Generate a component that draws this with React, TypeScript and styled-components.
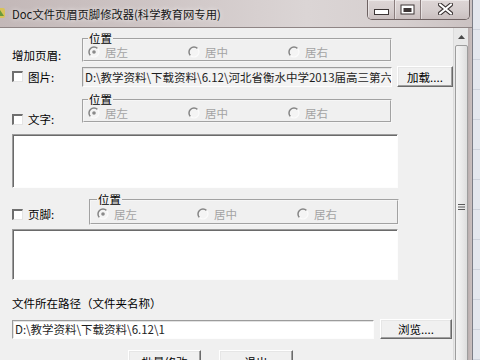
import React from "react";
import styled, { createGlobalStyle } from "styled-components";

const Global = createGlobalStyle`
  html, body { margin: 0; padding: 0; width: 480px; height: 360px; overflow: hidden; background: #f0f0f0; }
  body { font-family: "Noto Sans CJK SC", "Noto Sans", sans-serif; font-size: 11.5px; color: #000; }
  #root { width: 480px; height: 360px; }
`;

const Screen = styled.div`
  display: flex;
  width: 480px;
  height: 360px;
  overflow: hidden;
`;

const Win = styled.div`
  width: 472px;
  flex: none;
  display: flex;
  flex-direction: column;
  height: 100%;
`;

const TitleBar = styled.div`
  height: 27px;
  flex: none;
  display: flex;
  align-items: flex-start;
  background: linear-gradient(90deg, #c3b8b8 0%, #cfc6c6 35%, #dbd5d5 65%, #d6cfcf 85%, #cbc2c2 100%);
`;

const AppIcon = styled.svg`
  flex: none;
  margin: 7px 6px 0 -6px;
`;

const Title = styled.div`
  padding-top: 7px;
  line-height: 14px;
  font-size: 11.3px;
  color: #161616;
  white-space: nowrap;
  text-shadow: 0 0 5px rgba(255, 255, 255, 0.9);
`;

const Controls = styled.div`
  margin-left: auto;
  margin-right: 2px;
  height: 19px;
  display: flex;
  border: 1px solid #6e6262;
  border-top: none;
  border-radius: 0 0 5px 5px;
  overflow: hidden;
  box-shadow: inset 0 -1px 0 rgba(255, 255, 255, 0.5);
`;

const CtrlBtn = styled.div<{ $w: number; $first?: boolean }>`
  width: ${(p) => p.$w}px;
  height: 100%;
  display: flex;
  align-items: center;
  justify-content: center;
  background: linear-gradient(180deg, #ddd5d5 0%, #d6cece 50%, #c9bfbf 100%);
  border-left: ${(p) => (p.$first ? "none" : "1px solid #8a7d7d")};
  box-shadow: inset 1px 1px 0 rgba(255, 255, 255, 0.45);
`;

const Body = styled.div`
  flex: 1;
  display: flex;
  border-top: 1px solid #8f8585;
  min-height: 0;
`;

const Client = styled.div`
  flex: 1;
  display: flex;
  flex-direction: column;
  padding: 4px 0 0 12px;
  background: #f0f0f0;
  min-width: 0;
  overflow: hidden;

  & > * {
    flex: none;
  }
`;

const Row = styled.div<{ $top: number; $cols: string }>`
  display: grid;
  grid-template-columns: ${(p) => p.$cols};
  align-items: start;
  margin-top: ${(p) => p.$top}px;
`;

const CenterRow = styled(Row)`
  align-items: center;
`;

const LabelCell = styled.div<{ $pt?: number }>`
  display: flex;
  align-items: center;
  gap: 5px;
  height: 14px;
  line-height: 14px;
  padding-top: ${(p) => p.$pt ?? 0}px;
  white-space: nowrap;
`;

const CheckBox = styled.span`
  flex: none;
  width: 8px;
  height: 8px;
  background: #fff;
  border-top: 2px solid #6f6f6f;
  border-left: 2px solid #6f6f6f;
  border-right: 1px solid #e4e4e4;
  border-bottom: 1px solid #e4e4e4;
`;

const GroupBox = styled.fieldset<{ $pad: number; $pt?: number; $pb?: number }>`
  margin: 0;
  min-width: 0;
  width: 310px;
  box-sizing: border-box;
  padding: ${(p) => p.$pt ?? 0}px 0 ${(p) => p.$pb ?? 1}px ${(p) => p.$pad}px;
  border: 2px groove #f6f6f6;
  display: grid;
  grid-template-columns: repeat(3, 100px);
`;

const Legend = styled.legend`
  padding: 0 1px;
  margin: 0;
  line-height: 13px;
  font-size: 11.5px;
  color: #000;
`;

const RadioOpt = styled.div`
  display: flex;
  align-items: center;
  gap: 5px;
  height: 14px;
  line-height: 14px;
  color: #a3a3a3;
  white-space: nowrap;
`;

const Field = styled.div<{ $w: number; $h: number; $bg: string; $deep?: boolean }>`
  box-sizing: border-box;
  width: ${(p) => p.$w}px;
  height: ${(p) => p.$h}px;
  background: ${(p) => p.$bg};
  border-top: 1px solid #9c9c9c;
  border-left: 1px solid #9c9c9c;
  border-right: 1px solid #fdfdfd;
  border-bottom: 1px solid #fdfdfd;
  box-shadow: ${(p) => (p.$deep ? "inset 1px 1px 0 #6a6a6a" : "inset 1px 1px 0 #e2e2e2")};
  padding: 0 2px 0 2px;
  line-height: ${(p) => p.$h - 2}px;
  color: #1e1e1e;
  white-space: nowrap;
  overflow: hidden;
`;

const TextArea = styled(Field)<{ $top: number }>`
  margin-top: ${(p) => p.$top}px;
`;

const Btn = styled.button<{ $w: number; $h: number }>`
  box-sizing: border-box;
  width: ${(p) => p.$w}px;
  height: ${(p) => p.$h}px;
  padding: 0;
  margin: 0;
  font: inherit;
  line-height: 14px;
  color: #000;
  background: #f0f0f0;
  border: 1px solid;
  border-color: #ffffff #6a6a6a #6a6a6a #ffffff;
  box-shadow: inset -1px -1px 0 #a0a0a0, inset 1px 1px 0 #e6e6e6;
  white-space: nowrap;
`;

const EndBtn = styled(Btn)`
  justify-self: end;
`;

const PlainLabel = styled.div<{ $top: number }>`
  margin-top: ${(p) => p.$top}px;
  line-height: 14px;
  white-space: nowrap;
`;

const PathRow = styled.div`
  display: flex;
  align-items: center;
  gap: 6px;
  margin-top: 9px;
`;

const ActionRow = styled.div`
  display: flex;
  gap: 18px;
  margin: 11px 0 0 116px;
`;

const ScrollBar = styled.div`
  width: 15px;
  flex: none;
  display: flex;
  flex-direction: column;
  align-items: center;
  background: #e8e8e8;
  border-left: 1px solid #dcdcdc;
  box-sizing: border-box;
  overflow: hidden;
`;

const ArrowBtn = styled.div`
  height: 17px;
  width: 100%;
  flex: none;
  display: flex;
  align-items: center;
  justify-content: center;
`;

const Thumb = styled.div`
  flex: none;
  width: 13px;
  height: 324px;
  box-sizing: border-box;
  border: 1px solid #9d9d9d;
  border-radius: 2px;
  background: linear-gradient(90deg, #f4f4f4 0%, #ebebeb 50%, #dedede 100%);
  display: flex;
  align-items: center;
  justify-content: center;
`;

const Frame = styled.div`
  width: 4px;
  flex: none;
  background: linear-gradient(90deg, #b9aeae, #cbc1c1);
`;

const Outside = styled.div`
  width: 8px;
  flex: none;
  height: 100%;
  box-sizing: border-box;
  border-left: 1px solid #7b7d86;
  background: repeating-linear-gradient(180deg, #e4e7ee 0px, #e4e7ee 29px, #b9bfcc 30px);
`;

const Radio: React.FC<{ checked?: boolean; label: string }> = ({ checked, label }) => (
  <RadioOpt>
    <svg width="12" height="12" viewBox="0 0 12 12">
      <circle cx="6" cy="6" r="5" fill="#f4f4f4" />
      <path d="M2.46 9.54 A5 5 0 0 1 9.54 2.46" stroke="#858585" strokeWidth="1.5" fill="none" />
      <path d="M9.54 2.46 A5 5 0 0 1 2.46 9.54" stroke="#fbfbfb" strokeWidth="1.2" fill="none" />
      {checked && <circle cx="6" cy="6" r="1.8" fill="#8a8a8a" />}
    </svg>
    {label}
  </RadioOpt>
);

const Positions: React.FC<{ pad: number; pt?: number; pb?: number }> = ({ pad, pt, pb }) => (
  <GroupBox $pad={pad} $pt={pt} $pb={pb}>
    <Legend>位置</Legend>
    <Radio checked label="居左" />
    <Radio label="居中" />
    <Radio label="居右" />
  </GroupBox>
);

export default function App() {
  return (
    <>
      <Global />
      <Screen>
        <Win>
          <TitleBar>
            <AppIcon width="12" height="12" viewBox="0 0 12 12">
              <rect x="1" y="1" width="10" height="10" rx="2" fill="#d8c25a" />
              <path d="M2 9 L6 3 L10 9 Z" fill="#6a9a3a" />
            </AppIcon>
            <Title>Doc文件页眉页脚修改器(科学教育网专用)</Title>
            <Controls>
              <CtrlBtn $w={26} $first>
                <svg width="15" height="6" viewBox="0 0 15 6" style={{ marginTop: 4 }}>
                  <rect x="0.5" y="0.5" width="14" height="5" fill="#fff" stroke="#3c3535" />
                </svg>
              </CtrlBtn>
              <CtrlBtn $w={25}>
                <svg width="15" height="11" viewBox="0 0 15 11" style={{ marginTop: -1 }}>
                  <rect x="0.5" y="0.5" width="14" height="10" fill="#3c3535" />
                  <rect x="1.5" y="1.5" width="12" height="8" fill="#fff" />
                  <rect x="3.5" y="4" width="8" height="4" fill="#3c3535" />
                </svg>
              </CtrlBtn>
              <CtrlBtn $w={48}>
                <svg width="15" height="12" viewBox="0 0 15 12" style={{ marginTop: -1 }}>
                  <path d="M2 1.5 L13 10.5 M13 1.5 L2 10.5" stroke="#3c3535" strokeWidth="4.2" strokeLinecap="round" />
                  <path d="M2 1.5 L13 10.5 M13 1.5 L2 10.5" stroke="#fff" strokeWidth="2.2" strokeLinecap="round" />
                </svg>
              </CtrlBtn>
            </Controls>
          </TitleBar>
          <Body>
            <Client>
              <Row $top={0} $cols="70px 310px">
                <LabelCell $pt={16}>增加页眉:</LabelCell>
                <Positions pad={4} />
              </Row>

              <CenterRow $top={4} $cols="70px 310px 61px">
                <LabelCell>
                  <CheckBox />
                  图片:
                </LabelCell>
                <Field $w={310} $h={20} $bg="#f3f3f3">
                  D:\教学资料\下载资料\6.12\河北省衡水中学2013届高三第六
                </Field>
                <EndBtn $w={56} $h={21}>
                  加载....
                </EndBtn>
              </CenterRow>

              <Row $top={6} $cols="70px 310px">
                <LabelCell $pt={19}>
                  <CheckBox />
                  文字:
                </LabelCell>
                <Positions pad={4} />
              </Row>

              <TextArea $w={386} $h={54} $bg="#ffffff" $deep $top={8} />

              <Row $top={5} $cols="77px 310px">
                <LabelCell $pt={14}>
                  <CheckBox />
                  页脚:
                </LabelCell>
                <Positions pad={6} pt={1} pb={2} />
              </Row>

              <TextArea $w={386} $h={51} $bg="#ffffff" $deep $top={4} />

              <PlainLabel $top={16}>文件所在路径（文件夹名称）</PlainLabel>

              <PathRow>
                <Field $w={362} $h={19} $bg="#ffffff">
                  D:\教学资料\下载资料\6.12\1
                </Field>
                <Btn $w={72} $h={20}>浏览....</Btn>
              </PathRow>

              <ActionRow>
                <Btn $w={73} $h={23}>批量修改</Btn>
                <Btn $w={74} $h={23}>退出</Btn>
              </ActionRow>
            </Client>
            <ScrollBar>
              <ArrowBtn>
                <svg width="7" height="4" viewBox="0 0 7 4">
                  <path d="M0 4 L3.5 0 L7 4 Z" fill="#4a4a4a" />
                </svg>
              </ArrowBtn>
              <Thumb>
                <svg width="7" height="8" viewBox="0 0 7 8">
                  <path d="M0 1.5 H7 M0 4 H7 M0 6.5 H7" stroke="#5a5a5a" strokeWidth="1" />
                </svg>
              </Thumb>
            </ScrollBar>
            <Frame />
          </Body>
        </Win>
        <Outside />
      </Screen>
    </>
  );
}
